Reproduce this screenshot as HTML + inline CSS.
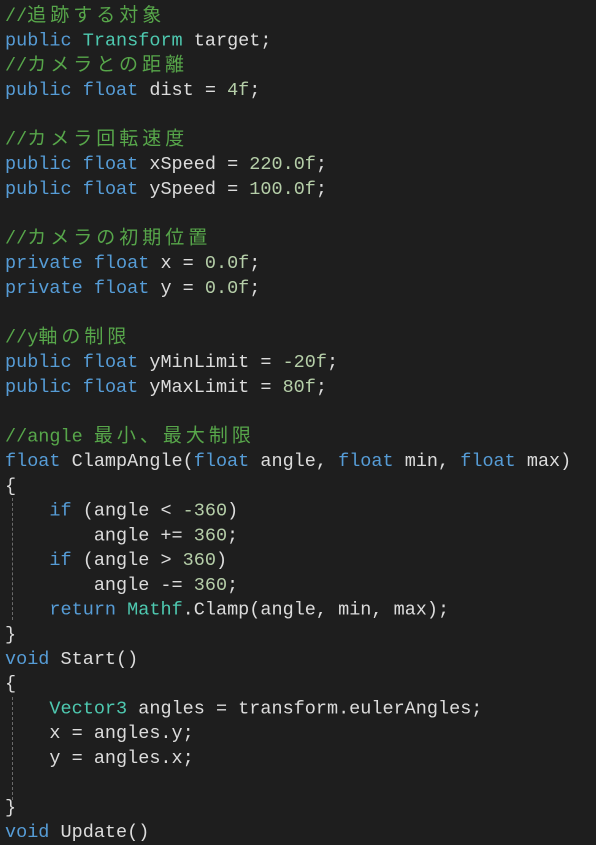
<!DOCTYPE html><html><head><meta charset="utf-8"><style>
body{margin:0;background:#1e1e1e;width:596px;height:843px;overflow:hidden;position:relative}
pre{margin:0;position:absolute;left:5px;top:4px;font-family:"Liberation Mono","Noto Sans CJK JP",monospace;font-size:18.5px;line-height:25px;color:#dcdcdc;transform:scaleY(0.9895);transform-origin:0 0}
.c{color:#57a64a}.k{color:#569cd6}.t{color:#4ec9b0}.n{color:#b5cea8}
.j{font-size:19px;letter-spacing:4px}
.g{position:absolute;left:12px;width:0;border-left:1px dashed #6a6a6a}
</style></head><body>
<div class="g" style="top:498px;height:122px"></div>
<div class="g" style="top:697px;height:103px"></div>
<pre><span class="c">//<span class="j">追跡する対象</span></span>
<span class="k">public</span> <span class="t">Transform</span> target;
<span class="c">//<span class="j">カメラとの距離</span></span>
<span class="k">public</span> <span class="k">float</span> dist = <span class="n">4f</span>;

<span class="c">//<span class="j">カメラ回転速度</span></span>
<span class="k">public</span> <span class="k">float</span> xSpeed = <span class="n">220.0f</span>;
<span class="k">public</span> <span class="k">float</span> ySpeed = <span class="n">100.0f</span>;

<span class="c">//<span class="j">カメラの初期位置</span></span>
<span class="k">private</span> <span class="k">float</span> x = <span class="n">0.0f</span>;
<span class="k">private</span> <span class="k">float</span> y = <span class="n">0.0f</span>;

<span class="c">//y<span class="j">軸の制限</span></span>
<span class="k">public</span> <span class="k">float</span> yMinLimit = <span class="n">-20f</span>;
<span class="k">public</span> <span class="k">float</span> yMaxLimit = <span class="n">80f</span>;

<span class="c">//angle <span class="j">最小、最大制限</span></span>
<span class="k">float</span> ClampAngle(<span class="k">float</span> angle, <span class="k">float</span> min, <span class="k">float</span> max)
{
    <span class="k">if</span> (angle &lt; <span class="n">-360</span>)
        angle += <span class="n">360</span>;
    <span class="k">if</span> (angle &gt; <span class="n">360</span>)
        angle -= <span class="n">360</span>;
    <span class="k">return</span> <span class="t">Mathf</span>.Clamp(angle, min, max);
}
<span class="k">void</span> Start()
{
    <span class="t">Vector3</span> angles = transform.eulerAngles;
    x = angles.y;
    y = angles.x;

}
<span class="k">void</span> Update()</pre>
</body></html>
